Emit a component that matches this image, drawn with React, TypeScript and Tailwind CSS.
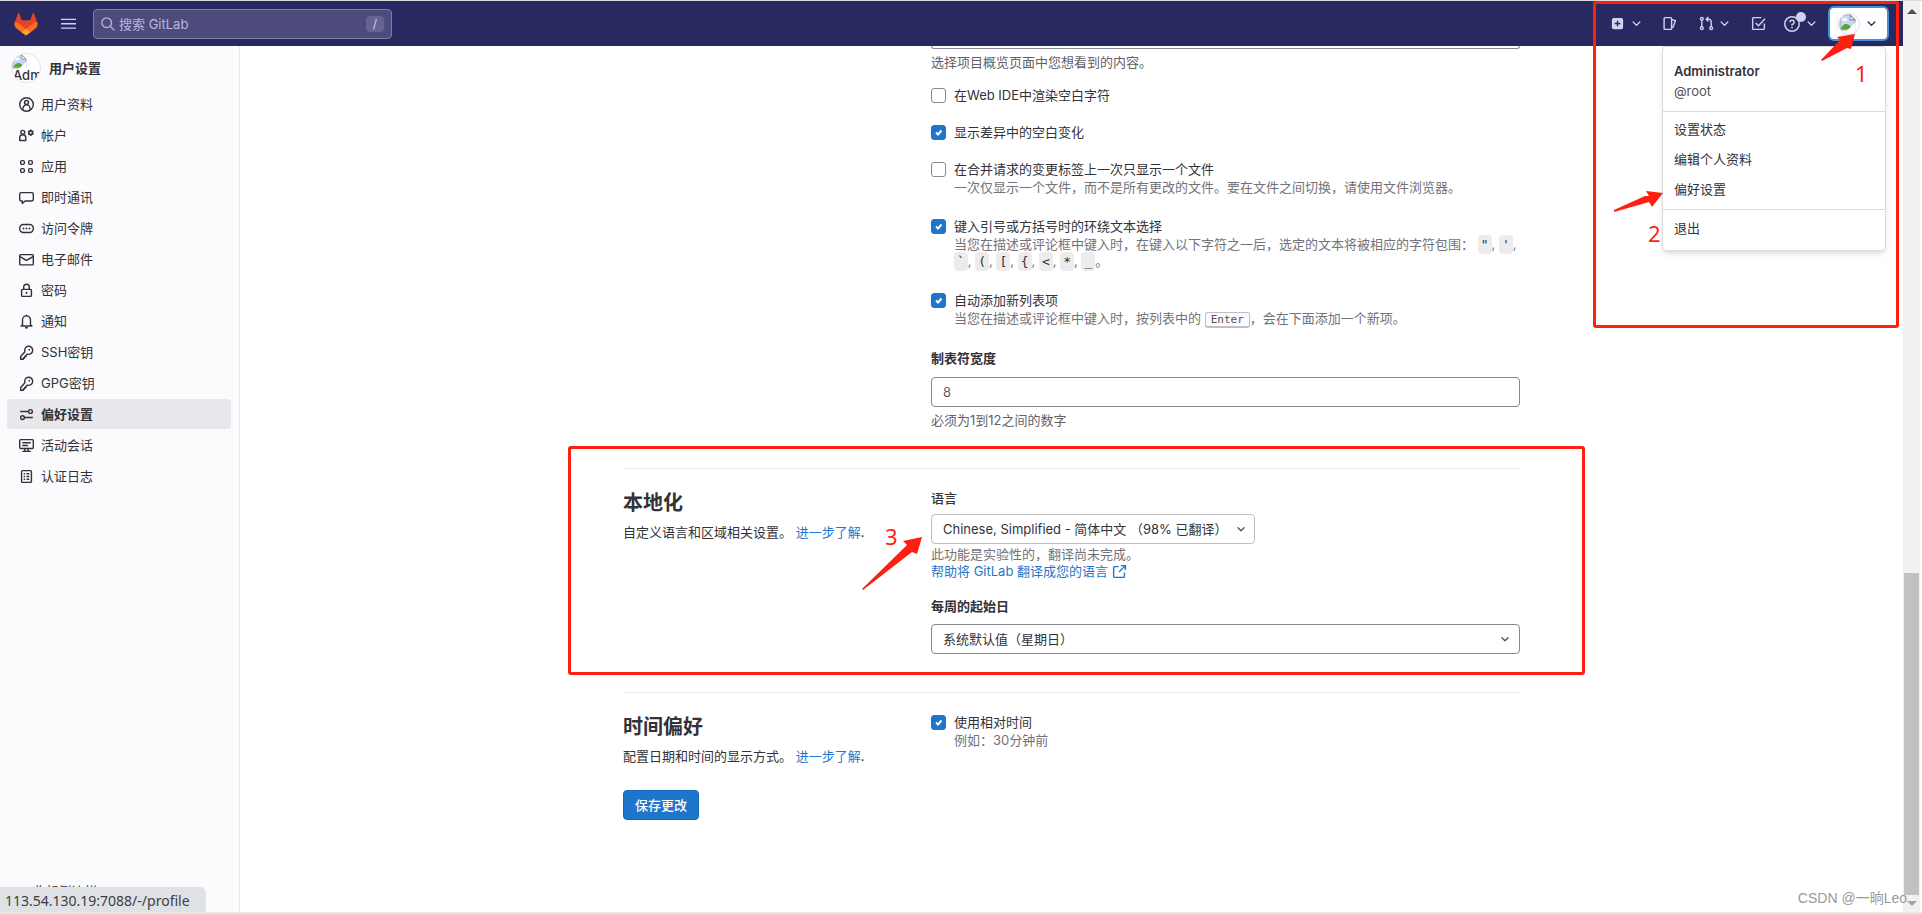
import { ReactNode } from "react";

type IconProps = { children: ReactNode; className?: string };

const Icon = ({ children, className = "size-[15px]" }: IconProps) => (
  <svg
    viewBox="0 0 16 16"
    fill="none"
    stroke="currentColor"
    strokeWidth="1.5"
    aria-hidden="true"
    className={`shrink-0 ${className}`}
  >
    {children}
  </svg>
);

const Chevron = ({ className = "size-[15px]" }: { className?: string }) => (
  <Icon className={className}>
    <path d="M4.500 6.500 8 10l3.500-3.500" strokeLinecap="round" strokeLinejoin="round" />
  </Icon>
);

const keyIcon = (
  <>
    <path d="M6.3 7.2a4.3 4.3 0 1 1 2.6 2.5l-1.4 1.4v1.2H6v1.5H4.6v1.4H1.8v-2.9z" strokeLinejoin="round" />
    <circle cx="11" cy="5" r=".9" fill="currentColor" stroke="none" />
  </>
);

const navItems: { label: string; icon: ReactNode; active?: boolean }[] = [
  {
    label: "用户资料",
    icon: (
      <>
        <circle cx="8" cy="8" r="7.25" />
        <circle cx="8" cy="5.8" r="2.1" />
        <path d="M4.2 13.6v-1.4A3.8 3.8 0 0 1 8 8.4a3.8 3.8 0 0 1 3.8 3.8v1.4" />
      </>
    ),
  },
  {
    label: "帐户",
    icon: (
      <>
        <circle cx="4" cy="4.6" r="2.1" />
        <path d="M.75 13.3V10.500a3.250 3.250 0 0 1 6.500 0v2.800z" strokeLinejoin="round" />
        <circle cx="12.500" cy="5" r="1.900" strokeWidth="1.700" />
        <path d="M12.500 1.600v1.200M12.500 7.200v1.200M9.600 3.300l1 .6M14.400 6.100l1 .6M9.600 6.700l1-.6M14.400 3.900l1-.6" />
      </>
    ),
  },
  {
    label: "应用",
    icon: (
      <>
        <rect x="1.750" y="1.750" width="4" height="4" rx="1.500" />
        <rect x="10.250" y="1.750" width="4" height="4" rx="1.500" />
        <rect x="1.750" y="10.250" width="4" height="4" rx="1.500" />
        <rect x="10.250" y="10.250" width="4" height="4" rx="1.500" />
      </>
    ),
  },
  {
    label: "即时通讯",
    icon: <path d="M2.250 2.750h11.500a1.500 1.500 0 0 1 1.500 1.500v6a1.500 1.500 0 0 1-1.500 1.500H6.500L3.500 14.500v-2.750H2.250a1.500 1.500 0 0 1-1.500-1.500v-6a1.500 1.500 0 0 1 1.500-1.500z" strokeLinejoin="round" />,
  },
  {
    label: "访问令牌",
    icon: (
      <>
        <rect x=".75" y="3.750" width="14.500" height="8.500" rx="4" />
        <g fill="currentColor" stroke="none">
          <circle cx="4.800" cy="8" r="1" />
          <circle cx="8" cy="8" r="1" />
          <circle cx="11.200" cy="8" r="1" />
        </g>
      </>
    ),
  },
  {
    label: "电子邮件",
    icon: (
      <>
        <rect x=".75" y="2.750" width="14.500" height="11" rx="1" />
        <path d="m1 5 7 4 7-4" />
      </>
    ),
  },
  {
    label: "密码",
    icon: (
      <>
        <rect x="2.750" y="6.750" width="10.500" height="7.500" rx="1" />
        <path d="M5 6.500V4.250a3 3 0 0 1 6 0V6.500M8 9.300v2.400" />
      </>
    ),
  },
  {
    label: "通知",
    icon: (
      <>
        <path d="M3.750 11.500V6.250a4.250 4.250 0 0 1 8.500 0v5.250l1.500 1.250H2.250z" strokeLinejoin="round" />
        <path d="M8 .8v1.400M6.500 14.600h3" />
      </>
    ),
  },
  { label: "SSH密钥", icon: keyIcon },
  { label: "GPG密钥", icon: keyIcon },
  {
    label: "偏好设置",
    active: true,
    icon: (
      <>
        <circle cx="12.250" cy="4.750" r="2" />
        <circle cx="3.750" cy="11.250" r="2" />
        <path d="M1.250 4.750h9M5.750 11.250h9" />
      </>
    ),
  },
  {
    label: "活动会话",
    icon: (
      <>
        <rect x=".75" y="1.750" width="14.500" height="9.500" rx="1" />
        <path d="M3.500 5h9M3.500 8h6M6.250 11.500v2.500M9.750 11.500v2.500M3.500 14.250h9" />
      </>
    ),
  },
  {
    label: "认证日志",
    icon: (
      <>
        <rect x="2.750" y="1.750" width="10.500" height="12.500" rx="1" />
        <path d="M5 5h1.500M8 5h3M5 8h1.500M8 8h3M5 11h1.500M8 11h3" />
      </>
    ),
  },
];

// placeholder the browser draws for an avatar that failed to load
const BrokenImage = ({ className }: { className: string }) => (
  <svg viewBox="0 0 16 16" aria-hidden="true" className={className}>
    <path d="M1 1h9.500L15 5.500V15H1z" fill="#c4d8f7" stroke="#a9adb3" strokeWidth="1" />
    <ellipse cx="5.500" cy="5.500" rx="2.500" ry="1.400" fill="#fff" />
    <path d="M1.500 14.500C3 9.500 8 7.500 11 12l2 2.500z" fill="#54a63a" />
    <path d="M15.500 8 7 16h8.500z" fill="#fff" />
    <path d="M10.500 1v4.500H15z" fill="#fff" stroke="#8d9197" />
  </svg>
);

const Tanuki = () => (
  <svg viewBox="0 0 24 24" role="img" aria-label="GitLab" className="size-6">
    <path d="M23 9.800 19.900 1.500a.7.7 0 0 0-1.300.1l-2.200 6.700H7.600L5.400 1.600a.7.7 0 0 0-1.300-.1L1 9.800a6 6 0 0 0 2 6.900l9 6.700 9-6.700a6 6 0 0 0 2-6.900z" fill="#e24329" />
    <path d="M23 9.800a11 11 0 0 0-4.300 2L12 17l4.500 3.200L21 16.700a6 6 0 0 0 2-6.900z" fill="#fc6d26" />
    <path d="M1 9.800a11 11 0 0 1 4.300 2L12 17l-4.500 3.200L3 16.700a6 6 0 0 1-2-6.900z" fill="#fc6d26" />
    <path d="m7.500 20.200 4.500 3.300 4.500-3.300L12 16.800z" fill="#fca326" />
  </svg>
);

const Header = () => (
  <header className="flex h-[45px] shrink-0 items-center bg-[#292961] pr-4 pl-[14px] text-[#d1d0ee]">
    <a href="#"><Tanuki /></a>
    <button aria-label="菜单" className="ml-[23px]">
      <Icon>
        <path d="M0 3.500h16M0 8.250h16M0 13h16" strokeWidth="1.400" />
      </Icon>
    </button>
    <label className="ml-[17px] flex h-[30px] w-[299px] items-center rounded border border-[#7c7ba6] bg-[#4c4b7b] px-[7px]">
      <Icon className="size-[14px] text-[#b8b7dc]">
        <circle cx="6.500" cy="6.500" r="5.500" />
        <path d="m10.500 10.500 4.500 4.500" strokeLinecap="round" />
      </Icon>
      <input
        aria-label="搜索 GitLab"
        placeholder="搜索 GitLab"
        className="ml-1 min-w-0 grow bg-transparent outline-none placeholder:text-[#b8b7dc]"
      />
      <kbd className="flex h-4 w-[18px] items-center justify-center rounded-sm bg-[#656495] font-[Inter] text-xs text-[#d1d0ee]">/</kbd>
    </label>

    <div className="ml-auto flex items-center">
      <button aria-label="新建" className="flex items-center gap-1">
        <Icon>
          <rect x="2" y="2" width="12" height="12" rx="2" fill="currentColor" stroke="none" />
          <path d="M8 5v6M5 8h6" stroke="#292961" />
        </Icon>
        <Chevron />
      </button>
      <button aria-label="议题" className="ml-[18px]">
        <Icon>
          <rect x="2.250" y="1.750" width="8" height="12.500" rx="1" />
          <path d="m10.500 3.800 3.800 1.300-2.500 6.800-1.300.5" strokeLinejoin="round" />
        </Icon>
      </button>
      <button aria-label="合并请求" className="ml-[22px] flex items-center gap-[3px]">
        <Icon>
          <circle cx="3" cy="3" r="1.500" />
          <circle cx="3" cy="13" r="1.500" />
          <circle cx="13" cy="13" r="1.500" />
          <path d="M3 4.500v7M13 11.500V6a2.500 2.500 0 0 0-2.500-2.500H8M10 1 7.600 3.500 10 6" />
        </Icon>
        <Chevron />
      </button>
      <button aria-label="待办事项" className="ml-[19px]">
        <Icon>
          <path d="M14.250 8v5.250a1 1 0 0 1-1 1H2.750a1 1 0 0 1-1-1V2.750a1 1 0 0 1 1-1H11" />
          <path d="m5 7.500 3 3 7-7.500" />
        </Icon>
      </button>
      <button aria-label="帮助" className="relative ml-[18px] flex items-center gap-1">
        <Icon className="size-4">
          <circle cx="8" cy="8" r="7.250" />
          <path d="M5.900 6.200A2.100 2.100 0 1 1 8 8.400v1.200" />
          <circle cx="8" cy="11.500" r=".9" fill="currentColor" stroke="none" />
        </Icon>
        <Chevron />
        <span className="absolute -top-1 left-3 size-[10px] rounded-full bg-[#d1d0ee]" />
      </button>
      <button
        aria-label="Administrator"
        className="ml-[11px] flex h-[31px] w-[57px] items-center justify-center gap-1 rounded bg-white text-[#292961] ring-2 ring-[#428fdc]"
      >
        <span className="flex size-[22px] items-start overflow-hidden rounded-full border border-[#dcdbe8]">
          <BrokenImage className="size-[17px] shrink-0" />
        </span>
        <Chevron />
      </button>
    </div>
  </header>
);

const Sidebar = () => (
  <aside className="relative w-60 shrink-0 border-r border-[#e6e5ea] bg-[#fbfafd] pt-[7px]">
    <div className="ml-[11px] flex items-center gap-2">
      <span className="size-[30px] overflow-hidden rounded-full border border-[#e3e2e8] bg-white">
        <BrokenImage className="size-[15px]" />
        <span className="block pl-px text-[13px] leading-3 font-medium">Adm</span>
      </span>
      <strong className="font-semibold">用户设置</strong>
    </div>
    <nav className="mt-[6px] flex flex-col gap-px pr-2 pl-[7px]">
      {navItems.map(({ label, icon, active }) => (
        <a
          key={label}
          href="#"
          className={`flex h-[30px] items-center gap-[7px] rounded px-3 ${active ? "bg-[#e8e7eb] font-semibold" : ""}`}
        >
          <Icon>{icon}</Icon>
          {label}
        </a>
      ))}
    </nav>
    <button className="absolute bottom-3 left-[19px] flex items-center gap-[6px]">
      <span>«</span>收起侧边栏
    </button>
  </aside>
);

type CheckProps = { id: string; label: string; checked?: boolean; children?: ReactNode };

const CheckItem = ({ id, label, checked, children }: CheckProps) => (
  <div className="mb-[18px] flex gap-2">
    <span className="relative mt-[2px] size-[15px] shrink-0">
      <input
        id={id}
        type="checkbox"
        defaultChecked={checked}
        className="peer block size-[15px] appearance-none rounded-[3px] border border-[#89888d] bg-white checked:border-[#1f75cb] checked:bg-[#1f75cb]"
      />
      <svg viewBox="0 0 15 15" aria-hidden="true" className="pointer-events-none absolute inset-0 hidden peer-checked:block">
        <path d="m5 7.500 2 2 3.500-4" fill="none" stroke="#fff" strokeWidth="2" />
      </svg>
    </span>
    <div>
      <label htmlFor={id} className="block leading-[19px]">{label}</label>
      {children && <p className="pb-[3px] leading-[17px] text-[#737278]">{children}</p>}
    </div>
  </div>
);

const Code = ({ children }: { children: ReactNode }) => (
  <code className="rounded bg-[#ececef] px-[3px] py-[2px] font-['DejaVu_Sans_Mono'] text-[13px] text-[#333238]">{children}</code>
);

const Section = ({ title, text, children }: { title: string; text: string; children: ReactNode }) => (
  <section className="grid grid-cols-[280px_1fr] gap-7 border-t border-[#ececef] pt-5">
    <div>
      <h4 className="text-xl leading-7 font-bold">{title}</h4>
      <p className="mt-[6px]">
        {text} <a href="#" className="text-[#1f75cb]">进一步了解</a>.
      </p>
    </div>
    <div>{children}</div>
  </section>
);

const Preferences = () => (
  <main className="min-w-0 grow overflow-hidden">
    <form className="mx-auto max-w-[897px]">
      <div className="pb-[39px] pl-[308px]">
        <div className="h-[3px] rounded-b border border-t-0 border-[#89888d]" />
        <p className="mt-1 mb-[15px] text-[#626168]">选择项目概览页面中您想看到的内容。</p>
        <CheckItem id="whitespace-ide" label="在Web IDE中渲染空白字符" />
        <CheckItem id="whitespace-diff" label="显示差异中的空白变化" checked />
        <CheckItem id="single-file" label="在合并请求的变更标签上一次只显示一个文件">
          一次仅显示一个文件，而不是所有更改的文件。要在文件之间切换，请使用文件浏览器。
        </CheckItem>
        <CheckItem id="surround" label="键入引号或方括号时的环绕文本选择" checked>
          当您在描述或评论框中键入时，在键入以下字符之一后，选定的文本将被相应的字符包围： <Code>"</Code>, <Code>'</Code>,{" "}
          <Code>`</Code>, <Code>(</Code>, <Code>[</Code>, <Code>{"{"}</Code>, <Code>&lt;</Code>, <Code>*</Code>, <Code>_</Code>。
        </CheckItem>
        <CheckItem id="auto-list" label="自动添加新列表项" checked>
          当您在描述或评论框中键入时，按列表中的{" "}
          <kbd className="rounded-[3px] border border-b-2 border-[#bfbfc3] bg-[#fbfafd] px-[5px] font-['DejaVu_Sans_Mono'] text-[11px] text-[#535158]">Enter</kbd>
          ，会在下面添加一个新项。
        </CheckItem>
        <label htmlFor="tab-width" className="block font-semibold">制表符宽度</label>
        <input
          id="tab-width"
          defaultValue="8"
          className="mt-[10px] block h-[30px] w-full rounded border border-[#89888d] px-[11px] text-[#626168]"
        />
        <p className="mt-1 text-[#626168]">必须为1到12之间的数字</p>
      </div>

      <Section title="本地化" text="自定义语言和区域相关设置。">
        <span id="language-label" className="block font-medium">语言</span>
        <button
          type="button"
          aria-labelledby="language-label"
          className="mt-[7px] mb-[2px] flex h-[30px] items-center gap-[6px] rounded border border-[#bfbfc3] pr-[6px] pl-[11px]"
        >
          Chinese, Simplified - 简体中文 （98% 已翻译）
          <Chevron className="size-[14px] text-[#535158]" />
        </button>
        <p className="leading-[17px] text-[#737278]">此功能是实验性的，翻译尚未完成。</p>
        <a href="#" className="flex items-center gap-1 leading-[17px] text-[#1f75cb]">
          帮助将 GitLab 翻译成您的语言
          <Icon>
            <path d="M7 2.750H2.750a1 1 0 0 0-1 1v9.500a1 1 0 0 0 1 1h9.500a1 1 0 0 0 1-1V9M9.500 1.750h4.750V6.500M14 2 7.500 8.500" />
          </Icon>
        </a>
        <label htmlFor="week-start" className="mt-[17px] block font-semibold">每周的起始日</label>
        <div className="relative mt-[9px] mb-[38px]">
          <select id="week-start" className="block h-[30px] w-full appearance-none rounded border border-[#89888d] bg-white px-[11px]">
            <option>系统默认值（星期日）</option>
          </select>
          <Chevron className="pointer-events-none absolute top-2 right-2 size-[14px] text-[#535158]" />
        </div>
      </Section>

      <Section title="时间偏好" text="配置日期和时间的显示方式。">
        <CheckItem id="relative-time" label="使用相对时间" checked>
          例如：30分钟前
        </CheckItem>
      </Section>
      <button type="submit" className="mt-5 h-[30px] rounded border border-[#1068bf] bg-[#1f75cb] px-[11px] font-medium text-white">
        保存更改
      </button>
    </form>
  </main>
);

const UserMenu = () => (
  <div className="absolute top-[45px] right-9 w-56 rounded border border-[#dcdcde] bg-white pb-[7px] shadow-md">
    <div className="px-[11px] pt-[14px] pb-[10px] leading-5">
      <div className="font-semibold">Administrator</div>
      <div className="text-[#535158]">@root</div>
    </div>
    <div className="flex flex-col border-y border-[#dcdcde] pt-[2px] pb-[5px] leading-[30px] *:px-[11px]">
      <a href="#">设置状态</a>
      <a href="#">编辑个人资料</a>
      <a href="#">偏好设置</a>
    </div>
    <a href="#" className="block px-[11px] pt-[3px] leading-[30px]">退出</a>
  </div>
);

const Scrollbar = () => (
  <div className="flex w-[17px] shrink-0 flex-col items-center bg-[#f1f1f1]">
    <div className="mt-2 border-x-[5px] border-b-[5px] border-x-transparent border-b-[#505050]" />
    <div className="mt-auto mr-px ml-auto h-[322px] w-[15px] bg-[#c1c1c1]" />
    <div className="mt-[6px] mb-[6px] border-x-[5px] border-t-[5px] border-x-transparent border-t-[#a3a3a3]" />
  </div>
);

const Arrow = ({ className, d }: { className: string; d: string }) => (
  <svg aria-hidden="true" className={`absolute ${className}`} fill="#ff1f10">
    <path d={d} />
  </svg>
);

// tutorial mark-up drawn over the page
const Annotations = () => (
  <div className="pointer-events-none absolute inset-0 font-['Noto_Sans'] text-[22px] leading-6 text-[#ff1f10]">
    <div className="absolute top-0 right-[23px] h-[327px] w-[306px] rounded-[3px] border-3 border-[#ff1f10]" />
    <div className="absolute top-[445px] left-[568px] h-[229px] w-[1017px] rounded-[3px] border-3 border-[#ff1f10]" />
    <Arrow className="top-[29px] left-[1820px] h-8 w-9" d="M35 4 31 19l-4-1L2 31l-1-1L20 10l-3-3z" />
    <Arrow className="top-[187px] left-[1612px] h-6 w-[52px]" d="M51 5 40 19l-3-5L2 24v-2L33 8l4 0-3-5z" />
    <Arrow className="top-[533px] left-[860px] h-[58px] w-16" d="M62 3 57 20l-5-2L3 56l-1-1L47 11l-4-4z" />
    <span className="absolute top-[60px] left-[1855px]">1</span>
    <span className="absolute top-[220px] left-[1648px]">2</span>
    <span className="absolute top-[523px] left-[885px]">3</span>
  </div>
);

export default function App() {
  return (
    <div
      lang="zh-CN"
      className="relative flex h-screen flex-col overflow-hidden border-t border-[#dcdcdc] bg-white font-[Inter,'Noto_Sans_CJK_SC',sans-serif] text-[13px] leading-[18px] text-[#333238]"
    >
      <div className="flex min-h-0 grow border-b-2 border-[#e8e8e8] pr-[2px]">
        <div className="flex min-w-0 grow flex-col">
          <Header />
          <div className="flex min-h-0 grow">
            <Sidebar />
            <Preferences />
          </div>
        </div>
        <Scrollbar />
      </div>
      <UserMenu />
      <div className="absolute bottom-[2px] left-0 h-[25px] rounded-tr-md bg-[#dee1e6] pt-[5px] pr-4 pl-[5px] font-['Noto_Sans'] text-sm leading-[18px] text-[#3c4043]">
        113.54.130.19:7088/-/profile
      </div>
      <span className="absolute right-[15px] bottom-[6px] font-['Liberation_Sans','Noto_Sans_CJK_SC',sans-serif] text-sm text-[#999]">CSDN @一晌Leo</span>
      <Annotations />
    </div>
  );
}
